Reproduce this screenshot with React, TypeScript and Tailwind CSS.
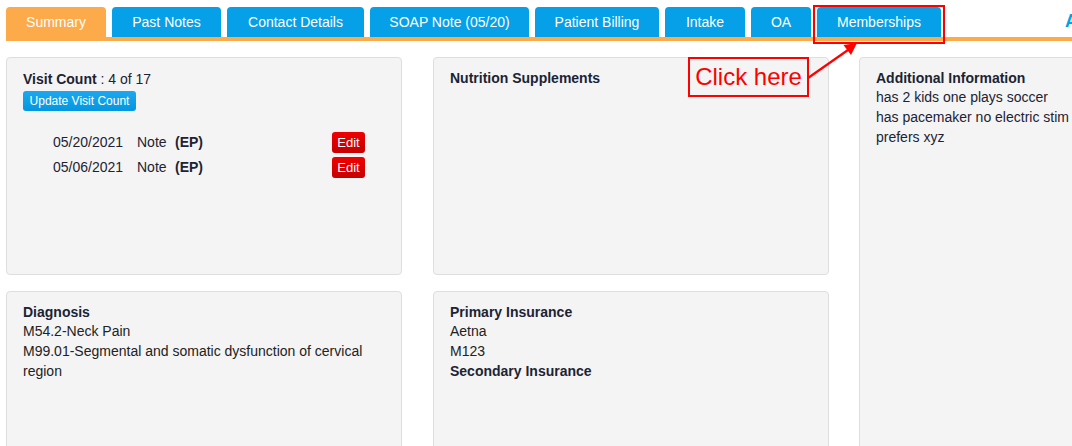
import React from "react";

const tabs = [
  { label: "Summary", w: "w-[100px]" },
  { label: "Past Notes", w: "w-[109px]" },
  { label: "Contact Details", w: "w-[137px]" },
  { label: "SOAP Note (05/20)", w: "w-[159px]" },
  { label: "Patient Billing", w: "w-[124px]" },
  { label: "Intake", w: "w-[80px]" },
  { label: "OA", w: "w-[60px]" },
  { label: "Memberships", w: "w-[124px]" },
];

const notes = [
  { date: "05/20/2021", kind: "Note", who: "(EP)" },
  { date: "05/06/2021", kind: "Note", who: "(EP)" },
];

function Card({ className, children }: { className?: string; children: React.ReactNode }) {
  return (
    <div className={`rounded-[4px] border border-[#dedede] bg-[#f4f4f4] px-4 ${className ?? ""}`}>
      {children}
    </div>
  );
}

export default function App() {
  return (
    <div
      className="relative h-[446px] w-[1072px] overflow-hidden bg-white text-[14px] text-[#1c2333]"
      style={{ fontFamily: '"Liberation Sans", Arial, Helvetica, sans-serif' }}
    >
      {/* tab strip */}
      <div className="pl-[6px] pt-[7px]">
        <div className="flex h-[30px] items-end">
          {tabs.map((t, i) => (
            <div
              key={t.label}
              className={`mr-[6px] flex h-[30px] shrink-0 items-center justify-center whitespace-nowrap rounded-t-[4px] text-[14px] text-white ${t.w} ${
                i === 0 ? "bg-[#fcaa4a]" : "bg-[#05a0e8]"
              }`}
            >
              {t.label}
            </div>
          ))}
          <div className="ml-[118px] shrink-0 self-start whitespace-nowrap pt-[3px] text-[18px] font-bold leading-[22px] text-[#05a0e8]">
            Appointments
          </div>
        </div>
        <div className="h-[4px] bg-[#fcaa4a]" />
      </div>

      {/* cards */}
      <div className="mt-4 flex pl-[6px]">
        <div className="flex w-[396px] shrink-0 flex-col gap-4">
          <Card className="h-[218px] pt-[12px]">
            <div className="leading-[18px]">
              <span className="font-bold">Visit Count</span> : 4 of 17
            </div>
            <button className="mt-[3px] flex h-[20px] w-[113px] items-center justify-center rounded-[3px] bg-gradient-to-b from-[#1aa9f0] to-[#0496e0] text-[12px] text-white">
              Update Visit Count
            </button>
            <div className="mt-[21px] flex flex-col gap-1 pl-[30px]">
              {notes.map((n) => (
                <div key={n.date} className="flex h-[21px] w-[312px] items-center">
                  <span className="w-[84px]">{n.date}</span>
                  <span className="w-[38px]">{n.kind}</span>
                  <span className="font-bold">{n.who}</span>
                  <button className="ml-auto flex h-[21px] w-[33px] items-center justify-center rounded-[3px] bg-gradient-to-b from-[#f00000] to-[#c40000] text-[13px] text-white">
                    Edit
                  </button>
                </div>
              ))}
            </div>
          </Card>
          <Card className="h-[200px] pt-[11px]">
            <div className="font-bold leading-[18px]">Diagnosis</div>
            <div className="leading-5 text-[#222]">M54.2-Neck Pain</div>
            <div className="leading-5 text-[#222]">M99.01-Segmental and somatic dysfunction of cervical region</div>
          </Card>
        </div>

        <div className="ml-[31px] flex w-[396px] shrink-0 flex-col gap-4">
          <Card className="h-[218px] pt-[11px]">
            <div className="font-bold leading-[18px]">Nutrition Supplements</div>
          </Card>
          <Card className="h-[200px] pt-[11px]">
            <div className="font-bold leading-[18px]">Primary Insurance</div>
            <div className="leading-5 text-[#222]">Aetna</div>
            <div className="leading-5 text-[#222]">M123</div>
            <div className="font-bold leading-5">Secondary Insurance</div>
          </Card>
        </div>

        <div className="ml-[30px] w-[396px] shrink-0">
          <Card className="h-[420px] pt-[11px]">
            <div className="font-bold leading-[18px]">Additional Information</div>
            <div className="leading-5">has 2 kids one plays soccer</div>
            <div className="leading-5">has pacemaker no electric stim</div>
            <div className="leading-5">prefers xyz</div>
          </Card>
        </div>
      </div>

      {/* annotation overlay */}
      <div className="absolute left-[813px] top-[5px] h-[39px] w-[132px] border-2 border-[#ff0000]" />
      <div className="absolute left-[688px] top-[57px] flex h-[40px] w-[121px] items-center justify-center border-2 border-[#ff0000] text-[24px] text-[#ff0000]">
        Click here
      </div>
      <svg className="absolute left-0 top-0" width="1072" height="446" viewBox="0 0 1072 446">
        <line x1="808" y1="78" x2="848" y2="50" stroke="#ff0000" strokeWidth="2.2" />
        <polygon points="857,43 851,55 843.5,45" fill="#ff0000" />
      </svg>
    </div>
  );
}
